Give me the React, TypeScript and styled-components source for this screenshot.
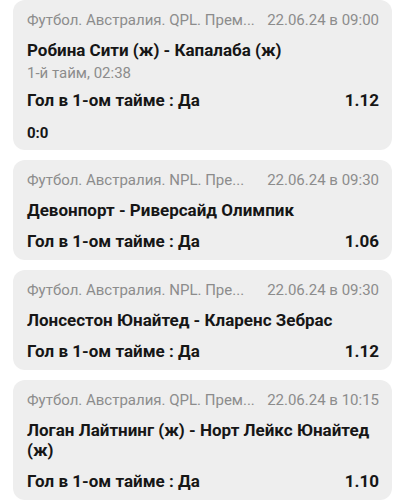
import React from "react";
import styled, { createGlobalStyle } from "styled-components";

const GlobalStyle = createGlobalStyle`
  html, body {
    margin: 0;
    padding: 0;
    background: #ffffff;
    font-family: Roboto, "Noto Sans", "Liberation Sans", sans-serif;
  }
`;

const List = styled.div`
  display: flex;
  flex-direction: column;
  gap: 10px;
  padding: 0 14px 0 13px;
`;

const Card = styled.div`
  background: #eeeeee;
  border-radius: 12px;
  padding: 10px 13px 9px 14px;
  display: flex;
  flex-direction: column;
`;

const Header = styled.div`
  display: flex;
  justify-content: space-between;
  align-items: center;
  gap: 4px;
  font-size: 15px;
  line-height: 20px;
  color: #8c8c8c;
  white-space: nowrap;
`;

const League = styled.span`
  flex-shrink: 1;
`;

const DateText = styled.span`
  flex-shrink: 0;
`;

const Title = styled.div`
  margin-top: 10px;
  font-size: 17px;
  line-height: 20px;
  font-weight: 700;
  color: #161616;
`;

const Sub = styled.div`
  margin-top: 3px;
  font-size: 15px;
  line-height: 20px;
  color: #8c8c8c;
`;

const BetRow = styled.div<{ $gap: number }>`
  margin-top: ${(p) => p.$gap}px;
  display: flex;
  justify-content: space-between;
  align-items: center;
  font-size: 17px;
  line-height: 20px;
  font-weight: 700;
  color: #161616;
`;

const Score = styled.div`
  margin-top: 13px;
  font-size: 15px;
  line-height: 20px;
  font-weight: 700;
  color: #161616;
  margin-bottom: -2px;
`;

type Bet = {
  league: string;
  date: string;
  title: string;
  sub?: string;
  odds: string;
  score?: string;
};

const bets: Bet[] = [
  {
    league: "Футбол. Австралия. QPL. Прем...",
    date: "22.06.24 в 09:00",
    title: "Робина Сити (ж) - Капалаба (ж)",
    sub: "1-й тайм, 02:38",
    odds: "1.12",
    score: "0:0",
  },
  {
    league: "Футбол. Австралия. NPL. Пре...",
    date: "22.06.24 в 09:30",
    title: "Девонпорт - Риверсайд Олимпик",
    odds: "1.06",
  },
  {
    league: "Футбол. Австралия. NPL. Пре...",
    date: "22.06.24 в 09:30",
    title: "Лонсестон Юнайтед - Кларенс Зебрас",
    odds: "1.12",
  },
  {
    league: "Футбол. Австралия. QPL. Прем...",
    date: "22.06.24 в 10:15",
    title: "Логан Лайтнинг (ж) - Норт Лейкс Юнайтед (ж)",
    odds: "1.10",
  },
];

export default function App() {
  return (
    <>
      <GlobalStyle />
      <List>
        {bets.map((b, i) => (
          <Card key={i}>
            <Header>
              <League>{b.league}</League>
              <DateText>{b.date}</DateText>
            </Header>
            <Title>{b.title}</Title>
            {b.sub && <Sub>{b.sub}</Sub>}
            <BetRow $gap={b.sub ? 7 : 11}>
              <span>Гол в 1-ом тайме : Да</span>
              <span>{b.odds}</span>
            </BetRow>
            {b.score && <Score>{b.score}</Score>}
          </Card>
        ))}
      </List>
    </>
  );
}
